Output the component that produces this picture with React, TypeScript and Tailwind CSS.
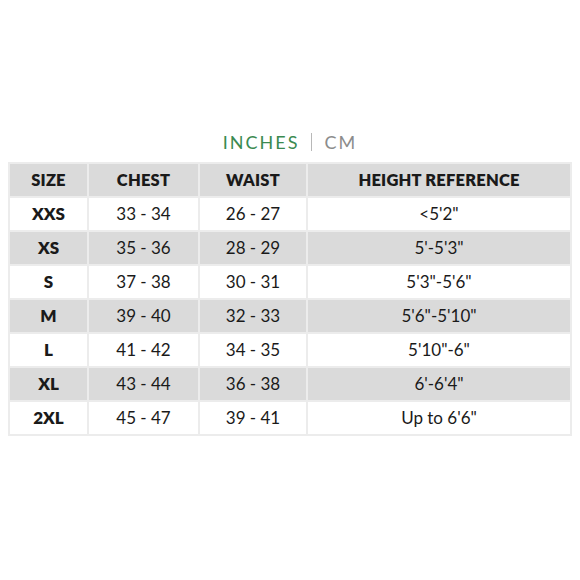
const rows = [
  ['XXS', '33 - 34', '26 - 27', '<5\'2"'],
  ['XS', '35 - 36', '28 - 29', '5\'-5\'3"'],
  ['S', '37 - 38', '30 - 31', '5\'3"-5\'6"'],
  ['M', '39 - 40', '32 - 33', '5\'6"-5\'10"'],
  ['L', '41 - 42', '34 - 35', '5\'10"-6"'],
  ['XL', '43 - 44', '36 - 38', '6\'-6\'4"'],
  ['2XL', '45 - 47', '39 - 41', 'Up to 6\'6"'],
]

const headers = ['SIZE', 'CHEST', 'WAIST', 'HEIGHT REFERENCE']

export default function App() {
  return (
    <div className="w-[580px] h-[580px] bg-white font-['Lato',sans-serif] text-[#1a1a1a]">
      <div className="pt-[133px] flex items-center justify-center text-[18px] tracking-[2px] leading-none">
        <span className="text-[#3b8a50]">INCHES</span>
        <span className="mx-[12px] w-[1px] h-[18px] bg-[#b8b8b8]" />
        <span className="text-[#8c8c8c]">CM</span>
      </div>

      <div className="mt-[11px] mx-[8px] grid grid-cols-[77px_109px_106px_1fr] gap-[2px] p-[2px] bg-[#ececec]">
        {headers.map((h) => (
          <div
            key={h}
            className="h-[32px] flex items-center justify-center bg-[#dadada] font-extrabold text-[16.5px] tracking-[0.2px]"
          >
            {h}
          </div>
        ))}
        {rows.map((row, i) =>
          row.map((cell, j) => (
            <div
              key={`${i}-${j}`}
              className={`h-[32px] flex items-center justify-center text-[17px] ${
                i % 2 === 1 ? 'bg-[#dadada]' : 'bg-white'
              } ${j === 0 ? 'font-extrabold' : ''}`}
            >
              {cell}
            </div>
          ))
        )}
      </div>
    </div>
  )
}
